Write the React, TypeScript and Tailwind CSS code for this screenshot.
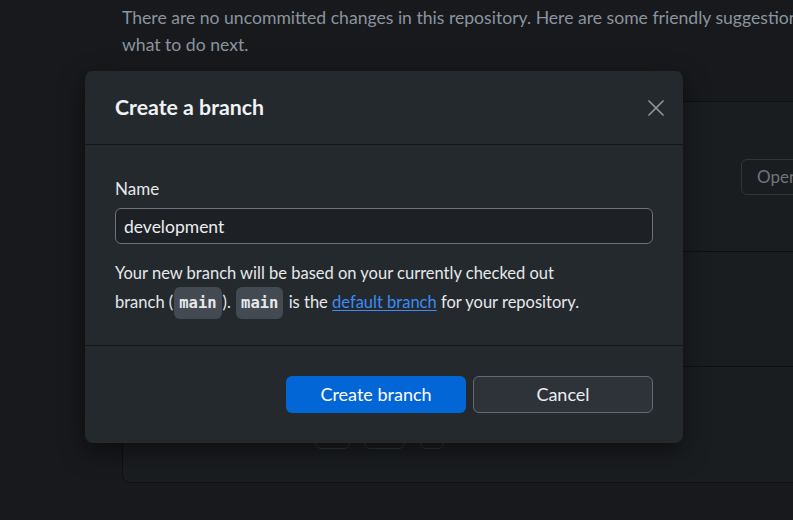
import { X } from 'lucide-react'

const FONT = "font-['Lato','Noto_Sans',sans-serif]"

function Code({ children }: { children: string }) {
  return (
    <code className="mx-[1px] inline-block rounded-md bg-[#434a52] px-[5px] leading-8 font-['DejaVu_Sans_Mono',monospace] text-[15.5px] font-bold text-[#e6e8ea]">
      {children}
    </code>
  )
}

function CreateBranchDialog() {
  return (
    <div className="absolute left-[85px] top-[71px] w-[598px] rounded-lg bg-[#24292e] shadow-[0_8px_24px_rgba(0,0,0,0.5)]">
      <header className="flex h-[74px] items-center justify-between border-b border-[#141618] pl-[30px] pr-[11px]">
        <h2 className="text-[21.3px] font-bold text-[#f0f2f4]">Create a branch</h2>
        <button className="flex h-8 w-8 items-center justify-center text-[#8b949e]">
          <X size={28} strokeWidth={1.5} />
        </button>
      </header>

      <div className="border-b border-[#141618] px-[30px] pt-[32px] pb-[26px] text-[16.5px] text-[#e6e8ea]">
        <label className="block text-[17px] leading-6">Name</label>
        <input
          defaultValue="development"
          className="mt-[7px] h-[36px] w-full rounded-md border border-[#6b727b] bg-[#1d2024] px-[8px] text-[17.5px] text-[#eceef0] outline-none"
        />
        <p className="mt-[16px] leading-[27px]">
          Your new branch will be based on your currently checked out
          <br />
          branch (<Code>main</Code>). <Code>main</Code> is the{' '}
          <a className="text-[#3a8cf6] underline underline-offset-2">default branch</a> for your repository.
        </p>
      </div>

      <footer className="flex justify-end gap-[7px] px-[30px] pt-[30px] pb-[30px]">
        <button className="h-[37px] w-[180px] rounded-md bg-[#0366d6] text-[18px] text-white">
          Create branch
        </button>
        <button className="h-[37px] w-[180px] rounded-md border border-[#656b74] bg-[#2e333a] text-[18px] text-[#eceef0]">
          Cancel
        </button>
      </footer>
    </div>
  )
}

export default function App() {
  return (
    <div className={`relative h-[520px] w-full overflow-hidden bg-[#17191c] ${FONT}`}>
      <div className="pl-[122px] pt-[4px]">
        <p className="whitespace-nowrap text-[17.6px] leading-[27px] text-[#8b949e]">
          There are no uncommitted changes in this repository. Here are some friendly suggestions for
          <br />
          what to do next.
        </p>

        <div className="mt-[43px] w-[900px] rounded-lg border border-[#0e1012] bg-[#1a1d20]">
          <div className="flex h-[150px] items-center border-b border-[#0e1012] pl-[24px]">
            <div className="w-[594px] shrink-0" />
            <button className="h-[36px] shrink-0 rounded-md border border-[#30353b] px-[15px] text-[17px] text-[#6e757d]">
              Open in Visual Studio Code
            </button>
          </div>
          <div className="h-[115px] border-b border-[#0e1012]" />
          <div className="flex h-[115px] items-start pl-[47px] pt-[56px] text-[14px] text-[#6e757d]">
            <span className="w-[145px] shrink-0 leading-[26px]">Repository menu</span>
            <span className="h-[26px] w-[35px] rounded-md border border-[#30353b]" />
            <span className="ml-[14px] h-[26px] w-[41px] rounded-md border border-[#30353b]" />
            <span className="ml-[15px] h-[26px] w-[24px] rounded-md border border-[#30353b]" />
          </div>
        </div>
      </div>

      <CreateBranchDialog />
    </div>
  )
}
